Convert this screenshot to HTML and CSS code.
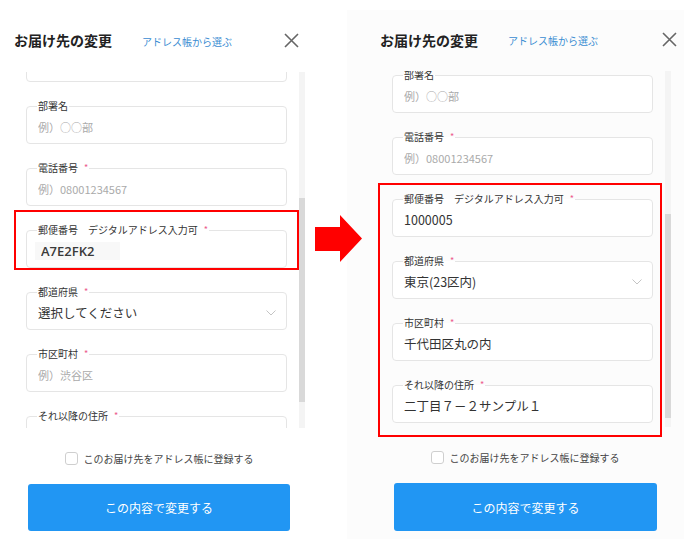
FILE: index.html
```html
<!DOCTYPE html>
<html lang="ja">
<head>
    <meta charset="UTF-8">
    <title>お届け先の変更 - デジタルアドレス入力</title>
    <link rel="stylesheet" href="styles.css">
</head>
<body>
    <div class="page">
        <!-- Before: digital address typed -->
        <section class="panel">
            <header class="panel-header">
                <h2 class="panel-title">お届け先の変更</h2>
                <a class="panel-link">アドレス帳から選ぶ</a>
                <button class="close" type="button">
                    <svg width="15" height="15" viewBox="0 0 15 15"><path d="M1 1L14 14M14 1L1 14" stroke="#666" stroke-width="1.6" fill="none"/></svg>
                </button>
            </header>
            <div class="scroll-area">
                <div class="scroll" data-scroll="221">
                    <form class="fields">
                        <fieldset class="field"><legend>お名前<span class="req">*</span></legend><input type="text"></fieldset>
                        <fieldset class="field"><legend>フリガナ<span class="req">*</span></legend><input type="text"></fieldset>
                        <fieldset class="field"><legend>会社名</legend><input type="text"></fieldset>
                        <fieldset class="field"><legend>会社名（フリガナ）</legend><input type="text"></fieldset>
                        <fieldset class="field"><legend>部署名</legend><input type="text" placeholder="例）○○部"></fieldset>
                        <fieldset class="field"><legend>電話番号<span class="req">*</span></legend><input type="text" placeholder="例）08001234567"></fieldset>
                        <fieldset class="field"><legend>郵便番号　デジタルアドレス入力可<span class="req">*</span></legend><input class="ime" type="text" value="A7E2FK2"></fieldset>
                        <fieldset class="field field-select"><legend>都道府県<span class="req">*</span></legend>
                            <select><option>選択してください</option></select>
                            <svg class="chevron" width="10" height="6" viewBox="0 0 10 6"><path d="M0.5 0.5L5 5L9.5 0.5" stroke="#c4c4c4" stroke-width="1" fill="none"/></svg>
                        </fieldset>
                        <fieldset class="field"><legend>市区町村<span class="req">*</span></legend><input type="text" placeholder="例）渋谷区"></fieldset>
                        <fieldset class="field"><legend>それ以降の住所<span class="req">*</span></legend><input type="text" placeholder="例）神南1-2-3"></fieldset>
                    </form>
                </div>
                <div class="scrollbar"><div class="thumb"></div></div>
            </div>
            <label class="save"><span class="check"></span>このお届け先をアドレス帳に登録する</label>
            <button class="submit" type="button">この内容で変更する</button>
            <div class="mark mark-before"></div>
        </section>

        <div class="arrow">
            <svg width="47" height="47" viewBox="0 0 47 47"><polygon points="0,12 25,12 25,0 47,23.5 25,47 25,36 0,36" fill="#ff0000"/></svg>
        </div>

        <!-- After: address filled in -->
        <section class="panel panel-after">
            <header class="panel-header">
                <h2 class="panel-title">お届け先の変更</h2>
                <a class="panel-link">アドレス帳から選ぶ</a>
                <button class="close" type="button">
                    <svg width="15" height="15" viewBox="0 0 15 15"><path d="M1 1L14 14M14 1L1 14" stroke="#666" stroke-width="1.6" fill="none"/></svg>
                </button>
            </header>
            <div class="scroll-area">
                <div class="scroll" data-scroll="251">
                    <form class="fields">
                        <fieldset class="field"><legend>お名前<span class="req">*</span></legend><input type="text"></fieldset>
                        <fieldset class="field"><legend>フリガナ<span class="req">*</span></legend><input type="text"></fieldset>
                        <fieldset class="field"><legend>会社名</legend><input type="text"></fieldset>
                        <fieldset class="field"><legend>会社名（フリガナ）</legend><input type="text"></fieldset>
                        <fieldset class="field"><legend>部署名</legend><input type="text" placeholder="例）○○部"></fieldset>
                        <fieldset class="field"><legend>電話番号<span class="req">*</span></legend><input type="text" placeholder="例）08001234567"></fieldset>
                        <fieldset class="field"><legend>郵便番号　デジタルアドレス入力可<span class="req">*</span></legend><input type="text" value="1000005"></fieldset>
                        <fieldset class="field field-select"><legend>都道府県<span class="req">*</span></legend>
                            <select><option>東京(23区内)</option></select>
                            <svg class="chevron" width="10" height="6" viewBox="0 0 10 6"><path d="M0.5 0.5L5 5L9.5 0.5" stroke="#c4c4c4" stroke-width="1" fill="none"/></svg>
                        </fieldset>
                        <fieldset class="field"><legend>市区町村<span class="req">*</span></legend><input type="text" value="千代田区丸の内"></fieldset>
                        <fieldset class="field"><legend>それ以降の住所<span class="req">*</span></legend><input type="text" value="二丁目７－２サンプル１"></fieldset>
                    </form>
                </div>
                <div class="scrollbar"><div class="thumb"></div></div>
            </div>
            <label class="save"><span class="check"></span>このお届け先をアドレス帳に登録する</label>
            <button class="submit" type="button">この内容で変更する</button>
            <div class="mark mark-after"></div>
        </section>
    </div>

    <script>
    // scroll both forms to the address part and size the scrollbar thumb
    document.querySelectorAll('.scroll-area').forEach(area => {
        const view = area.querySelector('.scroll');
        const thumb = area.querySelector('.thumb');
        view.scrollTop = parseInt(view.dataset.scroll, 10);

        const h = view.clientHeight;
        const total = view.scrollHeight;
        thumb.style.height = (h * h / total) + 'px';
        thumb.style.marginTop = (view.scrollTop * h / total) + 'px';
    });
    </script>
</body>
</html>
```

FILE: styles.css
```css
body {
    margin: 0;
    background: #fff;
    font-family: "Noto Sans CJK JP", "Noto Sans", sans-serif;
    color: #333;
}

.page {
    display: flex;
    align-items: flex-start;
    width: 695px;
    height: 539px;
    overflow: hidden;
}

.panel {
    position: relative;
    flex-shrink: 0;
    width: 306px;
    height: 539px;
    box-sizing: border-box;
}

.panel-after {
    width: 337px;
    height: 529px;
    margin-top: 10px;
    padding-left: 19px;
    background: #fcfcfc;
}

.panel-header {
    display: flex;
    align-items: center;
    height: 64px;
    padding: 8px 7px 0 14px;
}

.panel-after .panel-header {
    height: 59px;
    padding-top: 0;
    padding-bottom: 2px;
}

.panel-title {
    margin: 0;
    font-size: 14px;
    font-weight: bold;
    color: #222;
    line-height: 20px;
}

.panel-link {
    margin-left: 30px;
    margin-top: 2px;
    font-size: 10px;
    color: #3a8cd2;
    cursor: pointer;
}

.close {
    margin-left: auto;
    padding: 0;
    border: none;
    background: none;
    width: 15px;
    height: 15px;
    display: flex;
}

.scroll-area {
    display: flex;
    margin: 0 1px 0 14px;
    width: 291px;
    height: 356px;
}

.scroll {
    flex: 1;
    min-width: 0;
    overflow: hidden;
}

.scrollbar {
    flex-shrink: 0;
    width: 6px;
    background: #f4f4f4;
}

.thumb {
    background: #d9d9d9;
}

.fields {
    padding: 1px 12px 20px 12px;
}

.field {
    min-width: 0;
    margin: 0 0 18px;
    padding: 0 10px 2px 11px;
    border: 1px solid #e5e5e5;
    border-radius: 4px;
    background: #fff;
}

.field:last-child {
    margin-bottom: 0;
}

.field legend {
    height: 12px;
    margin-left: -1px;
    padding: 0 1px;
    font-size: 10px;
    line-height: 12px;
    color: #333;
}

.req {
    margin-left: 6px;
    color: #ec5b8c;
    font-size: 9px;
    line-height: 12px;
    vertical-align: top;
}

.field input,
.field select {
    display: block;
    width: 100%;
    height: 29px;
    margin: 0;
    padding: 0;
    border: none;
    outline: none;
    background: transparent;
    font-family: "Noto Sans CJK JP", "Noto Sans", sans-serif;
    font-size: 12.5px;
    color: #333;
}

.field input::placeholder {
    font-size: 11px;
    color: #aaa;
}

.field input.ime {
    width: calc(100% + 3px);
    margin-left: -3px;
    padding-left: 6px;
    box-sizing: border-box;
    font-family: "Open Sans", sans-serif;
    font-size: 13px;
    font-weight: 600;
    color: #3a3a3a;
    background: linear-gradient(#f8f8f8, #f8f8f8) no-repeat 0 center / 85px 18px;
}

.field-select {
    display: flex;
    align-items: center;
}

.field-select select {
    flex: 1;
    appearance: none;
    -webkit-appearance: none;
}

.chevron {
    flex-shrink: 0;
}

.save {
    display: flex;
    align-items: center;
    justify-content: center;
    gap: 6px;
    width: 262px;
    height: 20px;
    margin: 20px 0 0 28px;
    font-size: 10px;
    color: #444;
}

.check {
    width: 11px;
    height: 11px;
    border: 1px solid #cfcfcf;
    border-radius: 3px;
    background: #fff;
}

.submit {
    display: block;
    width: 262px;
    height: 47px;
    margin: 16px 0 0 28px;
    border: none;
    border-radius: 3px;
    background: #2196f3;
    color: #fff;
    font-family: "Noto Sans CJK JP", "Noto Sans", sans-serif;
    font-size: 12px;
}

.panel-after .submit { height: 48px; width: 263px; }

.arrow {
    position: relative;
    z-index: 1;
    flex-shrink: 0;
    width: 41px;
    box-sizing: border-box;
    padding: 215px 0 0 9px;
}

.arrow svg {
    display: block;
    overflow: visible;
}

/* red annotation frames */
.mark {
    position: absolute;
    box-sizing: border-box;
    border: 2px solid #ff0000;
    pointer-events: none;
}

.mark-before {
    left: 14px;
    top: 210px;
    width: 285px;
    height: 60px;
}

.mark-after {
    left: 31px;
    top: 173px;
    width: 284px;
    height: 254px;
}
```
